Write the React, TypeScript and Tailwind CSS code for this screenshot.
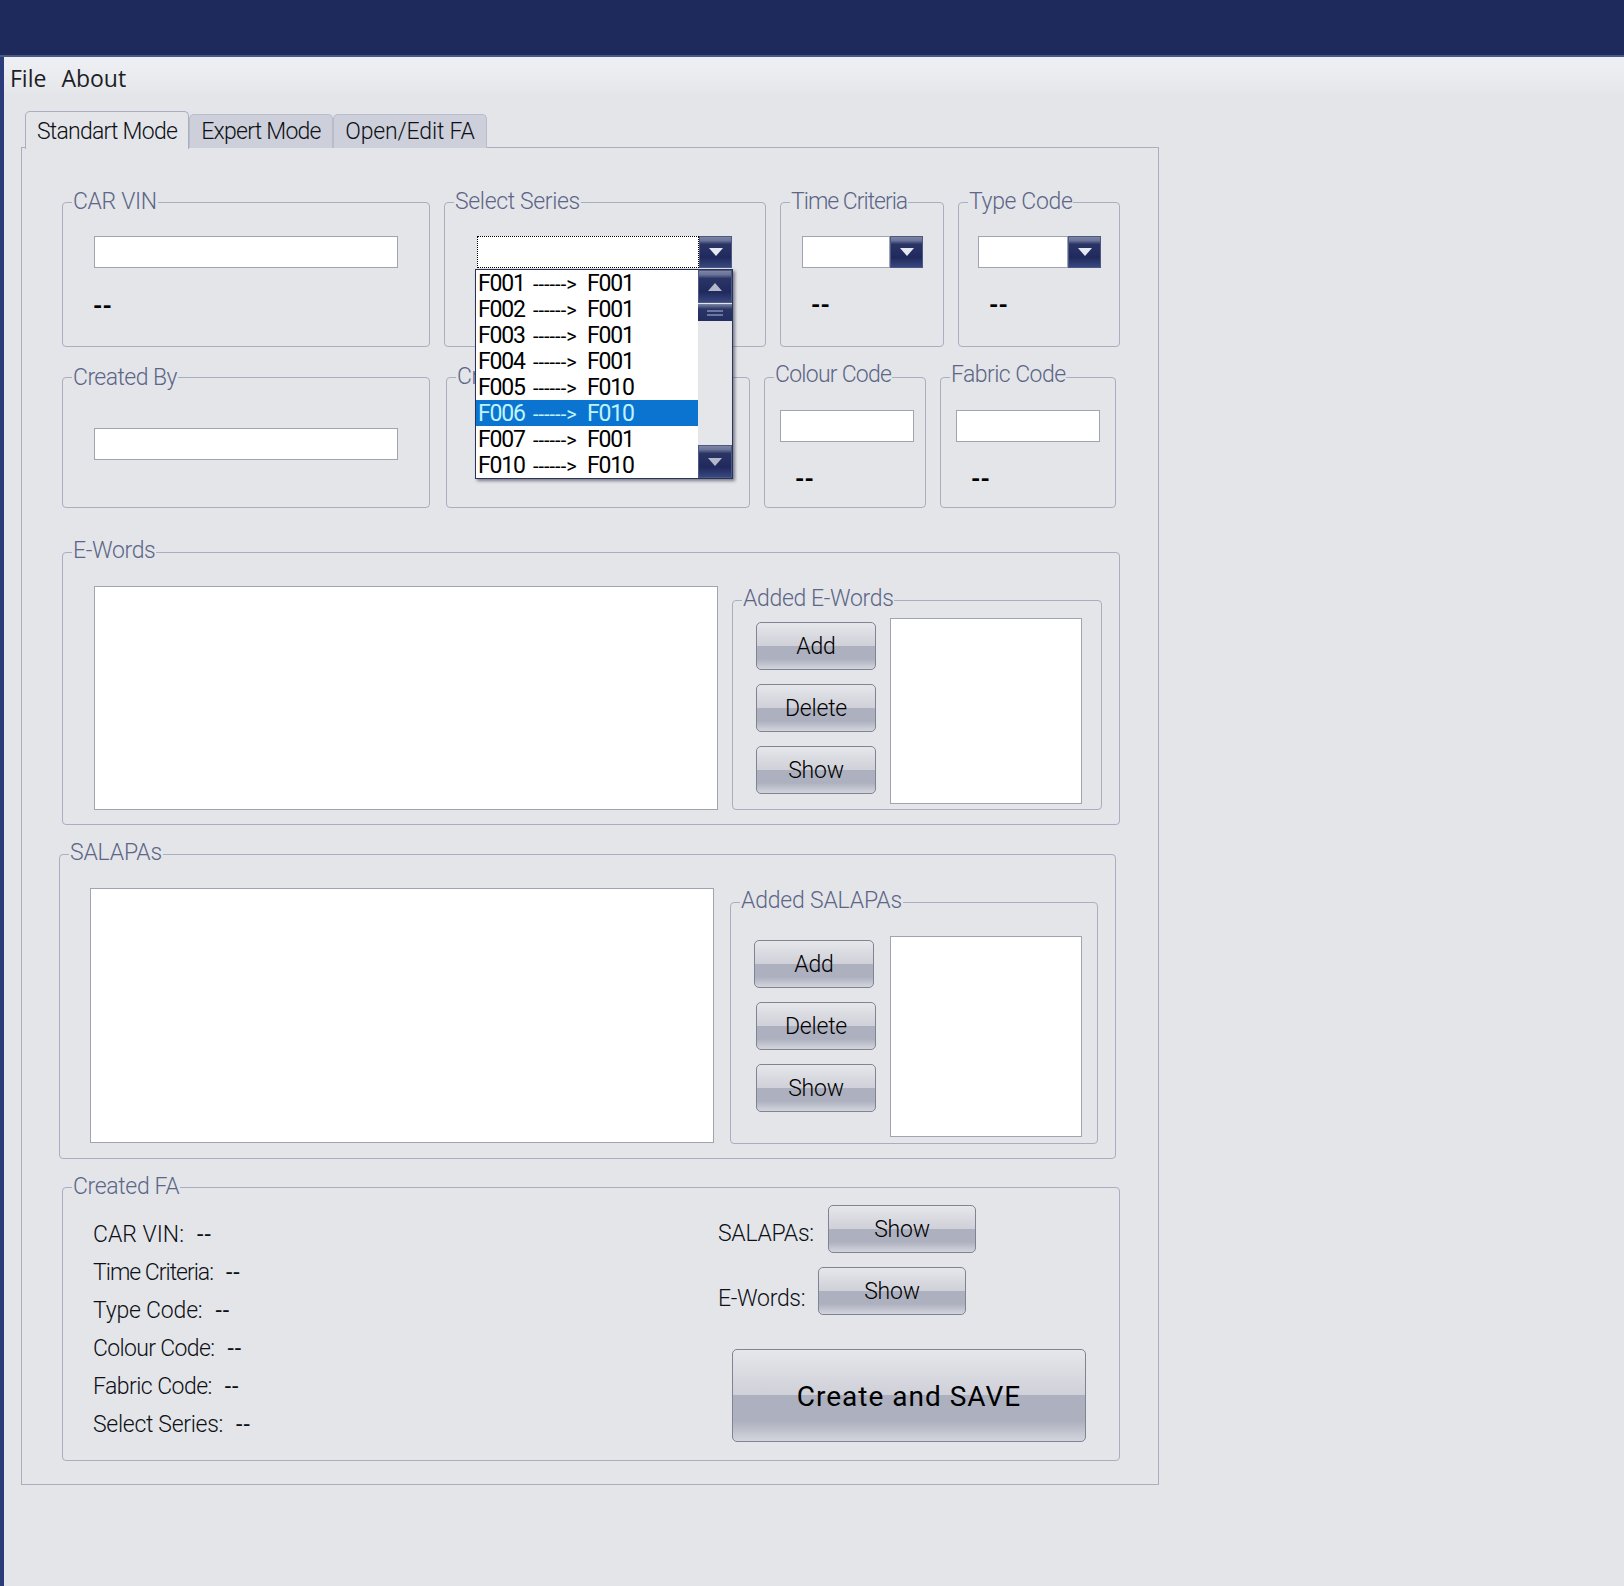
import React from "react";

const font = "font-['Roboto','Liberation_Sans',sans-serif] [font-variant-ligatures:none]";
const border = "border border-[#a9aec2] rounded-[4px]";

function Group({
  label,
  className = "",
  top = "-top-[14px]",
  tracking = "tracking-[-0.35px]",
  children,
}: {
  label: string;
  className?: string;
  top?: string;
  tracking?: string;
  children?: React.ReactNode;
}) {
  return (
    <div className={`relative shrink-0 box-border ${border} ${className}`}>
      <span className={`absolute left-[9px] ${top} ${tracking} bg-[#e3e5e9] px-px text-[23px] leading-[26px] text-[#5d6687] font-light whitespace-nowrap`}>
        {label}
      </span>
      {children}
    </div>
  );
}

function Input({ className = "" }: { className?: string }) {
  return <div className={`bg-white border border-[#a0a3b0] box-border ${className}`} />;
}

function Chevron({ up = false, color = "#e6e9f2" }: { up?: boolean; color?: string }) {
  return (
    <svg width="14" height="8" viewBox="0 0 14 8" className={up ? "rotate-180" : ""}>
      <path d="M0 0h14L7 8z" fill={color} />
    </svg>
  );
}

function NavyBtn({ className = "", up = false, color }: { className?: string; up?: boolean; color?: string }) {
  return (
    <div className={`flex items-center justify-center box-border border border-[#4d5886] bg-[linear-gradient(180deg,#7d85a2_0%,#6a7398_12%,#2a3566_24%,#20295c_68%,#37477e_100%)] ${className}`}>
      <Chevron up={up} color={color} />
    </div>
  );
}

function Btn({ children, className = "" }: { children: React.ReactNode; className?: string }) {
  return (
    <div
      className={`flex items-center justify-center box-border pt-[2px] border border-[#7f8394] rounded-[5px] text-black font-light text-[23px] tracking-[-0.2px] bg-[linear-gradient(180deg,#e6e7eb_0%,#cfd0d8_50%,#adb0be_50%,#adb0be_78%,#d3d5dd_100%)] ${className}`}
    >
      {children}
    </div>
  );
}

function Dash({ className = "" }: { className?: string }) {
  return <div className={`text-[24px] leading-[20px] font-bold text-black ${className}`}>--</div>;
}

function Combo({ w, selected = false }: { w: string; selected?: boolean }) {
  return (
    <div className="flex h-[32px]">
      <div className={`bg-white box-border ${selected ? "border border-dotted border-black" : "border border-[#a0a3b0]"} ${w}`} />
      <NavyBtn className="w-[33px] h-[32px]" />
    </div>
  );
}

const items = [
  ["F001", "F001"],
  ["F002", "F001"],
  ["F003", "F001"],
  ["F004", "F001"],
  ["F005", "F010"],
  ["F006", "F010"],
  ["F007", "F001"],
  ["F010", "F010"],
];

function Dropdown() {
  return (
    <div className="absolute left-[30px] top-[66px] z-10 flex w-[258px] h-[210px] box-border border border-[#2a3358] bg-white shadow-[2px_2px_3px_rgba(40,40,60,0.55)]">
      <div className="w-[222px] flex flex-col">
        {items.map(([a, b], i) => (
          <div
            key={a}
            className={`flex items-center h-[26px] pl-[2px] pt-[2px] text-[23px] tracking-[-1.2px] whitespace-nowrap ${
              i === 5 ? "bg-[#0a74d0] text-[#bff4ff]" : "text-black"
            }`}
          >
            <span className="w-[55px]">{a}</span>
            <span className="w-[54px] tracking-[0px] text-[20px]">------&gt;</span>
            <span>{b}</span>
          </div>
        ))}
      </div>
      <div className="flex-1 flex flex-col bg-[#e4e6ea]">
        <NavyBtn up color="#b4b9ca" className="h-[33px] w-full" />
        <div className="mt-px h-[17px] flex flex-col items-center justify-center gap-[2px] bg-[linear-gradient(180deg,#7d85a2,#2a3566_30%,#232d60)]">
          <div className="w-[16px] h-[2px] bg-[#6c76a0]" />
          <div className="w-[16px] h-[2px] bg-[#6c76a0]" />
        </div>
        <div className="flex-1" />
        <NavyBtn color="#b4b9ca" className="h-[33px] w-full" />
      </div>
    </div>
  );
}

function InfoRow({ children, tracking }: { children: React.ReactNode; tracking: string }) {
  return (
    <div className="h-[38px] pt-[4px] flex items-center text-[23px] font-light text-[#0e1016] whitespace-pre">
      <span className={tracking}>{children}</span>
      <span className="ml-[13px] tracking-[1px] font-normal">--</span>
    </div>
  );
}

export default function App() {
  return (
    <div className={`min-h-[1586px] w-full bg-[#e3e5e9] ${font} flex flex-col`}>
      <div className="h-[55px] bg-[#1f2a5c] shrink-0 border-b-[2px] border-[#4a5888] box-content" />
      <div className="flex-1 flex">
        <div className="w-[4px] bg-[#2a3c7a] shrink-0" />
        <div className="flex-1 flex flex-col">
          <div className="h-[38px] flex items-center gap-[15px] pl-[6px] pt-[4px] text-[23px] text-[#1c1e26] font-['Open_Sans',sans-serif] bg-[linear-gradient(180deg,#eef0f4,#e6e8ec_85%,#e3e5e9)]">
            <span>File</span>
            <span>About</span>
          </div>

          <div className="flex items-end ml-[21px] mt-[16px] h-[38px] relative z-[1] text-[23px] font-light text-[#0e1016]">
            <div className="w-[164px] h-[38px] pt-[3px] flex items-center justify-center tracking-[-0.75px] box-border border border-b-0 border-[#a9aec2] rounded-t-[5px] bg-[#e3e5e9]">
              Standart Mode
            </div>
            <div className="w-[144px] h-[34px] mb-[1px] pt-[2px] flex items-center justify-center tracking-[-0.75px] box-border border border-b-0 border-[#b8bccb] rounded-t-[5px] bg-[#cdd0da]">
              Expert Mode
            </div>
            <div className="w-[154px] h-[34px] mb-[1px] pt-[2px] flex items-center justify-center tracking-[-0.15px] box-border border border-b-0 border-[#b8bccb] rounded-t-[5px] bg-[#cdd0da]">
              Open/Edit FA
            </div>
          </div>

          <div className="ml-[17px] -mt-[2px] w-[1138px] h-[1338px] box-border border border-[#a9aec2] flex flex-col pl-[40px] pt-[54px]">
            {/* Row 1 */}
            <div className="flex h-[145px]">
              <Group label="CAR VIN" className="w-[368px] h-[145px] pl-[31px] pt-[33px]">
                <Input className="w-[304px] h-[32px]" />
                <Dash className="mt-[28px] -ml-[1px]" />
              </Group>
              <Group label="Select Series" className="w-[322px] h-[145px] ml-[14px] pl-[32px] pt-[33px]">
                <Combo w="w-[222px]" selected />
                <Dropdown />
              </Group>
              <Group label="Time Criteria" tracking="tracking-[-1px]" className="w-[164px] h-[145px] ml-[14px] pl-[21px] pt-[33px]">
                <Combo w="w-[88px]" />
                <Dash className="mt-[27px] ml-[9px]" />
              </Group>
              <Group label="Type Code" className="w-[162px] h-[145px] ml-[14px] pl-[19px] pt-[33px]">
                <Combo w="w-[90px]" />
                <Dash className="mt-[27px] ml-[11px]" />
              </Group>
            </div>

            {/* Row 2 */}
            <div className="flex h-[131px] mt-[30px]">
              <Group label="Created By" top="-top-[13px]" tracking="tracking-[-0.55px]" className="w-[368px] h-[131px] pl-[31px] pt-[50px]">
                <Input className="w-[304px] h-[32px]" />
              </Group>
              <Group label="Cr" className="w-[304px] h-[131px] ml-[16px]" />
              <Group label="Colour Code" top="-top-[16px]" tracking="tracking-[-0.75px]" className="w-[162px] h-[131px] ml-[14px] pl-[15px] pt-[32px]">
                <Input className="w-[134px] h-[32px]" />
                <Dash className="mt-[27px] ml-[15px]" />
              </Group>
              <Group label="Fabric Code" top="-top-[16px]" tracking="tracking-[-0.55px]" className="w-[176px] h-[131px] ml-[14px] pl-[15px] pt-[32px]">
                <Input className="w-[144px] h-[32px]" />
                <Dash className="mt-[27px] ml-[15px]" />
              </Group>
            </div>

            {/* E-Words */}
            <Group label="E-Words" top="-top-[15px]" className="w-[1058px] h-[273px] mt-[44px] flex pl-[31px] pt-[33px]">
              <Input className="w-[624px] h-[224px]" />
              <Group label="Added E-Words" top="-top-[15px]" className="w-[370px] h-[210px] ml-[14px] mt-[14px] flex pl-[23px] pt-[21px]">
                <div className="flex flex-col gap-[14px]">
                  <Btn className="w-[120px] h-[48px]">Add</Btn>
                  <Btn className="w-[120px] h-[48px]">Delete</Btn>
                  <Btn className="w-[120px] h-[48px]">Show</Btn>
                </div>
                <Input className="w-[192px] h-[186px] ml-[14px] -mt-[4px]" />
              </Group>
            </Group>

            {/* SALAPAs */}
            <Group label="SALAPAs" top="-top-[15px]" tracking="tracking-[-0.2px]" className="w-[1057px] h-[305px] mt-[29px] -ml-[3px] flex pl-[30px] pt-[33px]">
              <Input className="w-[624px] h-[255px]" />
              <Group label="Added SALAPAs" top="-top-[15px]" tracking="tracking-[-0.2px]" className="w-[368px] h-[242px] ml-[16px] mt-[14px] flex pl-[23px] pt-[37px]">
                <div className="flex flex-col gap-[14px]">
                  <Btn className="w-[120px] h-[48px]">Add</Btn>
                  <Btn className="w-[120px] h-[48px] ml-[2px]">Delete</Btn>
                  <Btn className="w-[120px] h-[48px] ml-[2px]">Show</Btn>
                </div>
                <Input className="w-[192px] h-[201px] ml-[14px] -mt-[4px]" />
              </Group>
            </Group>

            {/* Created FA */}
            <Group label="Created FA" className="w-[1058px] h-[274px] mt-[28px] flex pl-[30px] pt-[26px]">
              <div className="w-[625px] flex flex-col">
                <InfoRow tracking="tracking-[0px]">CAR VIN:</InfoRow>
                <InfoRow tracking="tracking-[-1px]">Time Criteria:</InfoRow>
                <InfoRow tracking="tracking-[-0.2px]">Type Code:</InfoRow>
                <InfoRow tracking="tracking-[-0.65px]">Colour Code:</InfoRow>
                <InfoRow tracking="tracking-[-0.55px]">Fabric Code:</InfoRow>
                <InfoRow tracking="tracking-[-0.3px]">Select Series:</InfoRow>
              </div>
              <div className="flex flex-col -mt-[9px]">
                <div className="flex items-center h-[48px] text-[23px] font-light tracking-[-0.3px] text-[#0e1016]">
                  <span className="w-[110px] mt-[10px]">SALAPAs:</span>
                  <Btn className="w-[148px] h-[48px]">Show</Btn>
                </div>
                <div className="flex items-center h-[48px] mt-[14px] text-[23px] font-light tracking-[-0.3px] text-[#0e1016]">
                  <span className="w-[100px] mt-[16px]">E-Words:</span>
                  <Btn className="w-[148px] h-[48px]">Show</Btn>
                </div>
                <Btn className="w-[354px] h-[93px] ml-[14px] mt-[34px] !font-normal !text-[28px] !tracking-[1px]">Create and SAVE</Btn>
              </div>
            </Group>
          </div>
        </div>
      </div>
    </div>
  );
}
